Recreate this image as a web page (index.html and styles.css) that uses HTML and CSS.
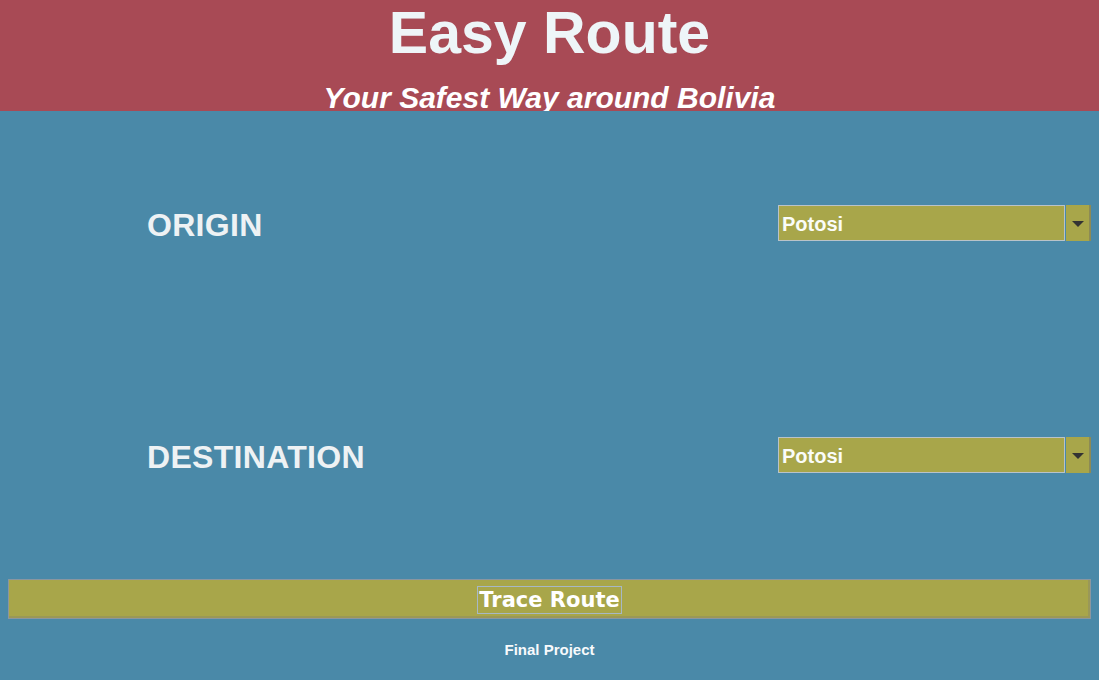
FILE: index.html
```html
<!DOCTYPE html>
<html>
<head>
<meta charset="utf-8">
<title>Easy Route</title>
<link rel="stylesheet" href="styles.css">
</head>
<body>
<div class="app">
  <header class="header">
    <h1 class="title">Easy Route</h1>
    <h2 class="subtitle">Your Safest Way around Bolivia</h2>
  </header>
  <main class="main">
    <div class="row">
      <span class="label">ORIGIN</span>
      <div class="combo">
        <div class="combo-field">Potosi</div>
        <div class="combo-arrow"><span class="tri"></span></div>
      </div>
    </div>
    <div class="row row-dest">
      <span class="label">DESTINATION</span>
      <div class="combo">
        <div class="combo-field">Potosi</div>
        <div class="combo-arrow"><span class="tri"></span></div>
      </div>
    </div>
    <div class="btn-wrap">
      <button class="trace"><span class="focus">Trace Route</span></button>
    </div>
    <div class="footer">Final Project</div>
  </main>
</div>
</body>
</html>
```
FILE: styles.css
```css
html, body {
  margin: 0;
  padding: 0;
}
body {
  width: 1099px;
  height: 680px;
  overflow: hidden;
  background: #4a89a8;
  font-family: "Liberation Sans", Arial, sans-serif;
}
.app {
  display: flex;
  flex-direction: column;
  height: 680px;
}
.header {
  height: 111px;
  background: #a84a55;
  overflow: hidden;
  text-align: center;
}
.title {
  margin: 0;
  font-size: 59px;
  line-height: 66px;
  font-weight: bold;
  color: #eef5f8;
}
.subtitle {
  margin: 15px 0 0;
  font-size: 30px;
  line-height: 34px;
  font-weight: bold;
  font-style: italic;
  color: #ffffff;
}
.main {
  display: flex;
  flex-direction: column;
  padding-top: 94px;
}
.row {
  display: flex;
  align-items: center;
  justify-content: space-between;
  height: 36px;
  padding-left: 147px;
  padding-right: 8px;
}
.row-dest {
  margin-top: 196px;
}
.label {
  font-size: 32px;
  line-height: 36px;
  font-weight: bold;
  color: #eef2f4;
  letter-spacing: 0.3px;
  padding-top: 3px;
}
.combo {
  display: flex;
  width: 313px;
  height: 36px;
  box-sizing: border-box;
}
.combo-field {
  flex: 1;
  box-sizing: border-box;
  height: 36px;
  border: 1px solid #b9c3c9;
  background: #a8a64a;
  color: #fafcf8;
  font-size: 20px;
  font-weight: bold;
  line-height: 36px;
  padding-left: 3px;
}
.combo-arrow {
  width: 25px;
  height: 36px;
  box-sizing: border-box;
  margin-left: 1px;
  background: #a8a64a;
  border-right: 2px solid #8c8a55;
  display: flex;
  align-items: center;
  justify-content: center;
}
.tri {
  width: 0;
  height: 0;
  border-left: 6px solid transparent;
  border-right: 6px solid transparent;
  border-top: 6px solid #333333;
  margin-top: 1px;
}
.btn-wrap {
  margin-top: 106px;
  padding: 0 8px;
}
.trace {
  display: flex;
  align-items: center;
  justify-content: center;
  width: 100%;
  height: 40px;
  box-sizing: border-box;
  margin: 0;
  padding: 2px 0 0;
  background: #a8a64a;
  border: 1px solid #8a96a0;
  box-shadow: inset -2px -2px 0 #9a9858;
  cursor: pointer;
}
.focus {
  display: block;
  border: 1px solid #a7b8c6;
  padding: 0 1px;
  font-family: "DejaVu Sans", Verdana, sans-serif;
  font-size: 21px;
  font-weight: bold;
  line-height: 26px;
  color: #ffffff;
}
.footer {
  margin-top: 22px;
  text-align: center;
  font-size: 15px;
  line-height: 17px;
  font-weight: bold;
  color: #f8fafc;
}
```
